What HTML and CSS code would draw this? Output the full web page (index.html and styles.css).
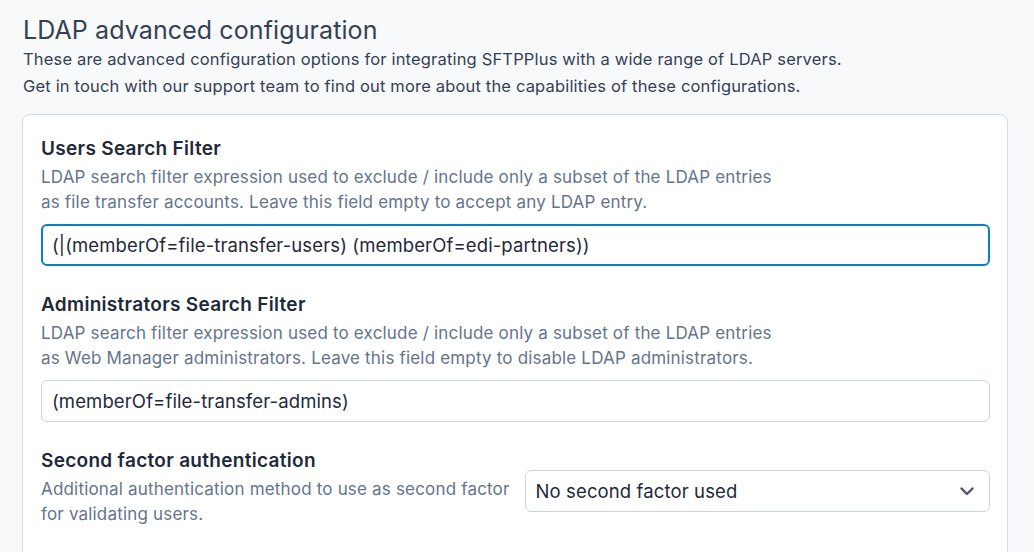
FILE: index.html
```html
<!DOCTYPE html>
<html lang="en">
<head>
<meta charset="utf-8">
<title>LDAP advanced configuration</title>
<link rel="stylesheet" href="styles.css">
</head>
<body>
<main class="page">
  <h1 class="title">LDAP advanced configuration</h1>
  <p class="intro">These are advanced configuration options for integrating SFTPPlus with a wide range of LDAP servers.<br>Get in touch with our support team to find out more about the capabilities of these configurations.</p>
  <section class="card">
    <div class="field">
      <label class="label">Users Search Filter</label>
      <p class="help">LDAP search filter expression used to exclude / include only a subset of the LDAP entries<br>as file transfer accounts. Leave this field empty to accept any LDAP entry.</p>
      <div class="input input-focus">(|(memberOf=file-transfer-users) (memberOf=edi-partners))</div>
    </div>
    <div class="field">
      <label class="label">Administrators Search Filter</label>
      <p class="help">LDAP search filter expression used to exclude / include only a subset of the LDAP entries<br>as Web Manager administrators. Leave this field empty to disable LDAP administrators.</p>
      <div class="input">(memberOf=file-transfer-admins)</div>
    </div>
    <div class="field field-row">
      <div class="field-text">
        <label class="label">Second factor authentication</label>
        <p class="help">Additional authentication method to use as second factor<br>for validating users.</p>
      </div>
      <div class="select">
        <span>No second factor used</span>
        <svg class="chevron" width="16" height="16" viewBox="0 0 16 16" aria-hidden="true"><path d="M2.5 5.5 L8 11 L13.5 5.5" fill="none" stroke="#4b5563" stroke-width="2.4" stroke-linecap="round" stroke-linejoin="round"/></svg>
      </div>
    </div>
  </section>
</main>
</body>
</html>
```
FILE: styles.css
```css
* { box-sizing: border-box; }
html, body {
  margin: 0;
  padding: 0;
  background: #f8f9fb;
  font-family: Inter, "Noto Sans", "Liberation Sans", sans-serif;
  color: #334155;
}
.page {
  padding: 14px 26px 0 22px;
}
.title {
  margin: 0 0 0 1px;
  font-size: 25px;
  font-weight: 400;
  line-height: 32px;
  letter-spacing: 0.1px;
  color: #334155;
}
.intro {
  margin: 0 0 14px 1px;
  font-size: 16.5px;
  line-height: 27px;
  letter-spacing: 0.17px;
  color: #334155;
}
.card {
  background: #ffffff;
  border: 1px solid #d3dbe6;
  border-radius: 8px;
  padding: 21px 17px 40px 18px;
  display: flex;
  flex-direction: column;
  gap: 26px;
}
.field {
  display: flex;
  flex-direction: column;
}
.label {
  display: block;
  font-size: 19px;
  font-weight: 600;
  line-height: 26px;
  letter-spacing: 0.3px;
  color: #1e293b;
}
.help {
  margin: 3px 0 9px;
  font-size: 17px;
  line-height: 25px;
  letter-spacing: 0.18px;
  color: #64748b;
}
.input {
  height: 42px;
  border: 1px solid #cbd3df;
  border-radius: 6px;
  padding: 0 10px;
  display: flex;
  align-items: center;
  font-size: 18.5px;
  letter-spacing: 0.12px;
  color: #1e293b;
  background: #fff;
}
.input-focus {
  border: 2px solid #0b7fc6;
  padding: 0 9px;
}
.field-row {
  display: grid;
  grid-template-columns: minmax(0, 1fr) minmax(0, 1fr);
  column-gap: 18px;
  align-items: center;
}
.field-text .help {
  margin-bottom: 0;
  white-space: nowrap;
}
.select {
  height: 42px;
  border: 1px solid #cbd3df;
  border-radius: 6px;
  padding: 0 14px 0 10px;
  display: flex;
  align-items: center;
  justify-content: space-between;
  font-size: 18.5px;
  letter-spacing: 0.12px;
  color: #1e293b;
  background: #fff;
  margin-top: 6px;
}
.chevron { display: block; }
```
